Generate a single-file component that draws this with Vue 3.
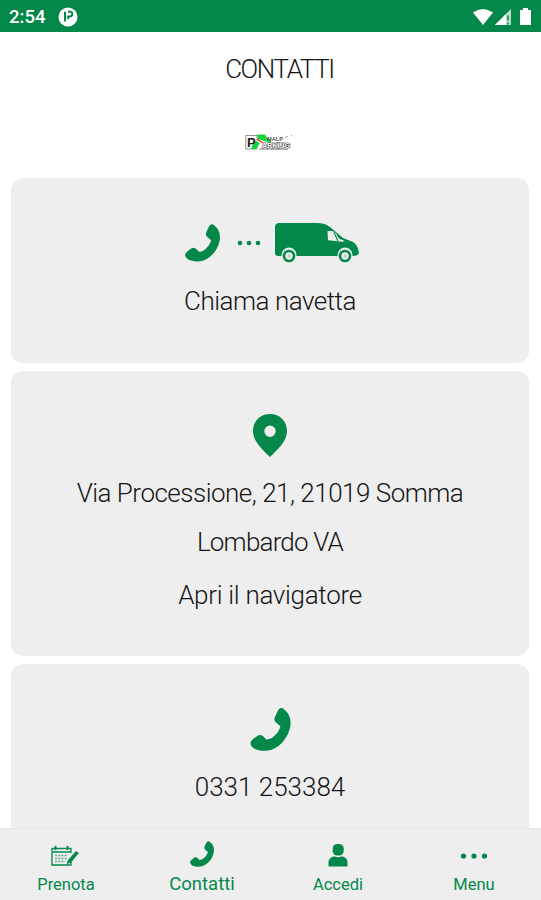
<template>
  <div class="screen">
    <header class="status-bar">
      <span class="clock">2:54</span>
      <svg class="app-badge" viewBox="0 0 20 20">
        <circle cx="10" cy="10" r="9.5" fill="#fff" />
        <path d="M7 4.800V14.500M10 4.800H12.500Q14.500 5 14.200 7.500Q14 9.500 11.500 9.500H10.200V12" fill="none" stroke="#04884a" stroke-width="2" />
      </svg>
      <svg class="signals" viewBox="0 0 62 20">
        <path d="M0 5.500Q10 -1.500 20 5.500L10 18Z" fill="#fff" />
        <path d="M38 2v16H22Z" fill="#b9dfcb" />
        <path d="M33 7v11H22Z" fill="#fff" />
        <path d="M35 8.500v5M35 15.500v2" stroke="#04884a" stroke-width="1.500" />
        <path d="M47 3h3V1h5v2h3v15H47Z" fill="#fff" />
      </svg>
    </header>

    <main class="content">
      <h1><span class="line">CONTATTI</span></h1>

      <svg class="logo" viewBox="0 0 48 18">
        <path d="M.8 2.500H12V16H.8Z" fill="#fff" stroke="#777" stroke-width=".8" />
        <path d="M12 1.500H20L22 5L26 7V10L19 8L13 6Z" fill="#12d53d" />
        <path d="M11 8L15 10L11 16H6L8 11Z" fill="#12d53d" />
        <path d="M12 6L18 10" stroke="#df352d" stroke-width="1.500" />
        <text x="2" y="13.500" class="logo-p">P</text>
        <text x="22" y="7.500" class="logo-top" textLength="16" lengthAdjust="spacingAndGlyphs">MALP</text>
        <text x="17" y="14.500" class="logo-bottom" textLength="28" lengthAdjust="spacingAndGlyphs">ARKING</text>
        <path d="M14 16.200H43" stroke="#777" stroke-width=".8" />
        <path d="M40 4.500l3-1.500M46 2l1 1" stroke="#999" />
      </svg>

      <section class="card card-shuttle">
        <div class="shuttle-icons">
          <svg class="shuttle-phone" viewBox="0 0 122 130"><path :d="phonePath" /></svg>
          <svg class="shuttle-dots" viewBox="0 0 24 6">
            <circle cx="3" cy="3" r="2.300" /><circle cx="12" cy="3" r="2.300" /><circle cx="21" cy="3" r="2.300" />
          </svg>
          <svg class="van" viewBox="0 0 84 40">
            <path d="M3 0H42Q50 0 55 4L68 15L78 19Q83 22 84 30Q83 33 78 33H3Q0 33 0 30V4Q0 1 3 0Z" />
            <path d="M52.500 8H57Q59 8 61 10.500L64 15.500L70 18L67 18.700L53 17.300Z" fill="#eee" />
            <path d="M59 9.500L63 18" stroke="#04884a" stroke-width="1.200" />
            <g v-for="x in [14, 70]" :key="x">
              <path :d="`M${x - 7.5} 34V32A7.500 7.500 0 0 1 ${x + 7.5} 32V34Z`" fill="#eee" />
              <circle :cx="x" cy="33" r="6.300" />
              <circle :cx="x" cy="33" r="3.700" fill="#eee" />
              <circle :cx="x" cy="33" r="1.800" fill="#b9d8c7" />
            </g>
          </svg>
        </div>
        <p class="line shuttle-label">Chiama navetta</p>
      </section>

      <section class="card card-address">
        <svg class="pin" viewBox="0 0 34 43">
          <path fill-rule="evenodd" d="M17 0C7 0 0 7.500 0 17C0 27 8 34 17 43C26 34 34 27 34 17C34 7.500 27 0 17 0ZM17 11.500A5.700 5.700 0 1 1 17 22.900A5.700 5.700 0 1 1 17 11.500Z" />
        </svg>
        <p class="line street">Via Processione, 21, 21019 Somma</p>
        <p class="line city">Lombardo VA</p>
        <p class="line navigate">Apri il navigatore</p>
      </section>

      <section class="card card-phone">
        <svg class="phone" viewBox="0 0 122 130"><path :d="phonePath" /></svg>
        <p class="line number">0331 253384</p>
      </section>
    </main>

    <nav class="tabs">
      <a v-for="tab in tabs" :key="tab.id" class="tab" :class="tab.id">
        <span class="tab-icon">
          <svg v-if="tab.id === 'prenota'" width="28" height="22" viewBox="0 0 28 22">
            <path d="M1 3.500H20V8M1 3V20H20V17M1 7H20" fill="none" stroke="#04884a" stroke-width="1.300" />
            <path d="M4.500 1V5M16.500 1V5" stroke="#04884a" stroke-width="2" />
            <path d="M4 10.500H17M4 13.500H16M4 16.500H14" stroke="#5cab82" stroke-width="1.500" stroke-dasharray="2 1.200" />
            <path d="M25 6L27.800 8L20.500 17L15.500 19.500L17 15Z" />
          </svg>
          <svg v-else-if="tab.id === 'contatti'" width="24" height="26" viewBox="0 0 122 130"><path :d="phonePath" /></svg>
          <svg v-else-if="tab.id === 'accedi'" width="20" height="23" viewBox="0 0 20 23">
            <rect x="4.700" y="0" width="11" height="11.500" rx="4.600" />
            <path d="M.5 22.500V18C.5 14.500 4 12.500 7 12.500Q10 14 13 12.500C16.500 12.500 19.500 14.500 19.500 18V22.500Z" />
          </svg>
          <svg v-else width="28" height="8" viewBox="0 0 28 8">
            <circle cx="3.500" cy="4" r="2.600" /><circle cx="14" cy="4" r="2.600" /><circle cx="24.500" cy="4" r="2.600" />
          </svg>
        </span>
        <span class="tab-label">{{ tab.label }}</span>
      </a>
    </nav>
  </div>
</template>

<script setup>
const phonePath = 'M92 0Q98 -1 103 5C119 17 124 36 121 56C115 87 94 115 65 126C47 132 24 130 10 122Q-2 114 1 103Q4 96 23 83Q32 79 38 85L48 95Q55 96 65 91C78 81 88 69 91 55L76 42Q70 35 75 26L84 7Q87 1 92 0Z'

const tabs = [
  { id: 'prenota', label: 'Prenota' },
  { id: 'contatti', label: 'Contatti' },
  { id: 'accedi', label: 'Accedi' },
  { id: 'menu', label: 'Menu' }
]
</script>

<style>
body {
  margin: 0;
}
</style>

<style scoped>
.screen {
  display: flex;
  flex-direction: column;
  width: 541px;
  height: 900px;
  overflow: hidden;
  background: #fff;
  color: #151515;
  font-family: Roboto, "Liberation Sans", sans-serif;
}

svg {
  display: block;
  flex: none;
  fill: #04884a;
}

.status-bar {
  display: flex;
  align-items: center;
  box-sizing: border-box;
  flex: none;
  height: 32px;
  padding: 2px 6px 0 9px;
  background: #04884a;
}

.clock {
  width: 49px;
  color: #fff;
  font-size: 18.5px;
  font-weight: 500;
}

.app-badge {
  width: 20px;
  height: 20px;
}

.signals {
  width: 62px;
  height: 20px;
  margin-left: auto;
}

.content {
  flex: 1;
  min-height: 0;
  overflow: hidden;
  padding: 0 12px 0 11px;
}

.line {
  margin: 0;
  font-size: 26px;
  font-weight: 300;
  line-height: 50px;
  text-align: center;
  white-space: nowrap;
  letter-spacing: -0.5px;
}

h1 {
  display: flex;
  justify-content: center;
  margin: 12px 0 0 19px;
}

h1 .line {
  letter-spacing: -1.4px;
}

.logo {
  width: 48px;
  height: 18px;
  margin: 39px 0 0 234px;
  overflow: visible;
}

.logo-p {
  fill: #222;
  font: bold 13px "Liberation Sans", sans-serif;
}

.logo-top {
  fill: #555;
  font: bold 6px "Liberation Sans", sans-serif;
}

.logo-bottom {
  fill: #fff;
  stroke: #444;
  stroke-width: 1.2px;
  paint-order: stroke;
  font: bold 8px "Liberation Sans", sans-serif;
}

.card {
  display: flex;
  flex-direction: column;
  align-items: center;
  box-sizing: border-box;
  margin-bottom: 8px;
  border-radius: 12px;
  background: #eee;
}

.card-shuttle {
  height: 184.5px;
  margin-top: 27px;
  padding-top: 45px;
}

.shuttle-icons {
  display: flex;
  align-items: flex-start;
  margin-left: 3px;
}

.shuttle-phone {
  width: 35px;
  height: 38px;
  margin-top: 1px;
}

.shuttle-dots {
  width: 24px;
  height: 6px;
  margin: 17px 14px 0 17px;
}

.van {
  width: 84px;
  height: 40px;
}

.shuttle-label {
  margin-top: 13px;
}

.card-address {
  height: 285.5px;
  padding-top: 43.5px;
}

.pin {
  width: 34px;
  height: 43px;
}

.street {
  margin-top: 11px;
}

.city {
  margin-top: -1px;
  letter-spacing: -0.8px;
}

.navigate {
  margin-top: 2.5px;
  letter-spacing: -0.3px;
}

.card-phone {
  height: 185px;
  margin-bottom: 0;
  padding-top: 44px;
}

.phone {
  width: 41px;
  height: 43px;
}

.number {
  margin-top: 11px;
  letter-spacing: 0;
}

.tabs {
  display: grid;
  grid-template-columns: repeat(4, 136px);
  box-sizing: border-box;
  flex: none;
  width: 543px;
  height: 72px;
  margin-left: -2px;
  border-top: 1px solid #e6e6e6;
  background: #eee;
}

.tab {
  display: flex;
  flex-direction: column;
  align-items: center;
  color: #04884a;
}

.tab-icon {
  display: flex;
  align-items: center;
  justify-content: center;
  height: 53px;
}

.prenota .tab-icon {
  margin-left: -2px;
}

.tab-label {
  margin-top: -7px;
  font-size: 16.5px;
  line-height: 20px;
}

.contatti .tab-icon {
  height: 49px;
}

.contatti .tab-label {
  margin-top: -4px;
  font-size: 18.5px;
}
</style>
